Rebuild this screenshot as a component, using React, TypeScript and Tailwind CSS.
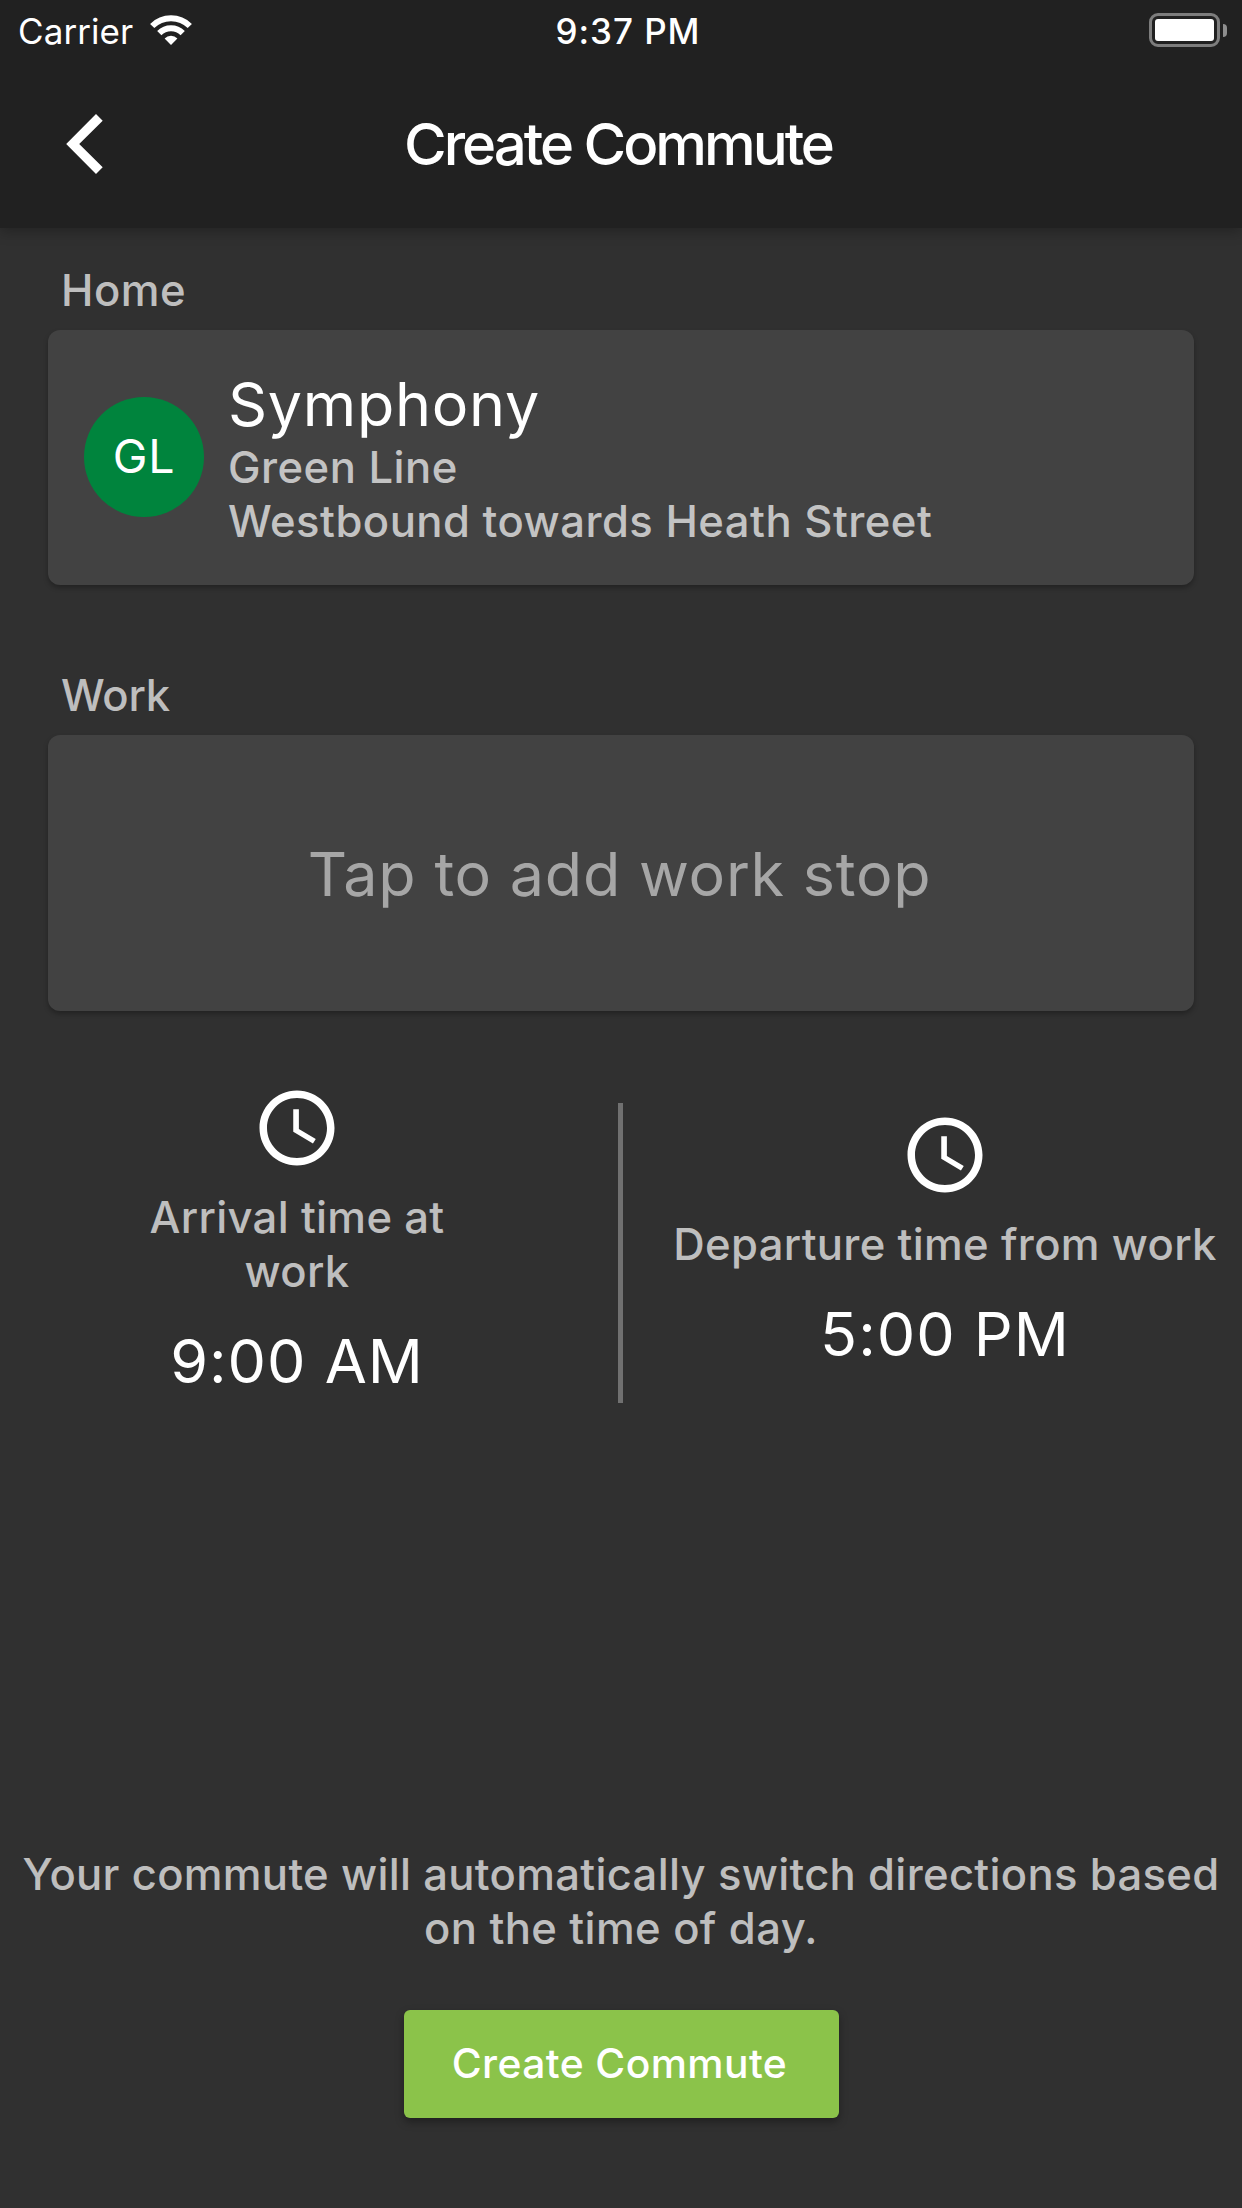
import { MdAccessTime } from "react-icons/md";

function WifiIcon() {
  return (
    <svg className="h-[30px] w-[42px]" viewBox="0 0 42 30" fill="none" stroke="#fff" strokeWidth="6">
      <path d="M2.2 11A26.6 26.6 0 0 1 39.8 11" />
      <path d="M9.3 18.1A16.6 16.6 0 0 1 32.7 18.1" />
      <path d="M14.6 23.4A9 9 0 0 1 27.4 23.4L21 29.9Z" fill="#fff" stroke="none" />
    </svg>
  );
}

function Battery() {
  return (
    <div className="flex items-center gap-[3px]">
      <div className="h-[34px] w-[71px] rounded-[9px] border-3 border-[#7d7d7d] p-[3px]">
        <div className="h-full w-full rounded-[3px] bg-white" />
      </div>
      <div className="h-[13px] w-1 rounded-r-full bg-[#8e8e8e]" />
    </div>
  );
}

function Header() {
  return (
    <header className="z-10 h-[228px] shrink-0 bg-[#212121] shadow-[0_4px_12px_rgba(0,0,0,0.25)]">
      <div className="grid h-[60px] grid-cols-[400px_1fr_400px] items-center pr-[15px] pl-[18px]">
        <div className="flex items-center gap-[17px]">
          <span className="pt-px text-[35px] leading-[42px] tracking-[0.08px]">Carrier</span>
          <WifiIcon />
        </div>
        <span className="pt-px pl-[11px] text-center text-[35px] leading-[42px] font-medium tracking-[0.94px] whitespace-nowrap">
          9:37 PM
        </span>
        <div className="flex justify-end">
          <Battery />
        </div>
      </div>
      <div className="grid h-[168px] grid-cols-[200px_1fr_200px] items-center">
        <button className="ml-[66px] w-[37px]" aria-label="Back">
          <svg className="h-[60px] w-[37px]" viewBox="0 0 37 60" fill="#fff">
            <path d="M0.2 30L30 0L36.7 6.7L13.2 30L36.7 53.3L30 60Z" />
          </svg>
        </button>
        <h1 className="pr-[6px] text-center text-[58.2px] leading-[70px] font-medium tracking-[-3.03px]">
          Create Commute
        </h1>
      </div>
    </header>
  );
}

const card = "mx-[48px] mt-3 flex items-center rounded-xl bg-[#424242] shadow-[0_3px_5px_rgba(0,0,0,0.28)]";
const label = "text-[43.6px] leading-[54px] font-medium text-white/70";

function TimePicker({ title, time, width }: { title: string; time: string; width: string }) {
  return (
    <div className="flex w-[594px] flex-col items-center">
      <MdAccessTime className="size-[90px]" />
      <p className={`mt-[18px] text-center ${label} ${width}`}>{title}</p>
      <p className="mt-[25px] mb-[25px] text-[61px] leading-[74px] tracking-[1px]">{time}</p>
    </div>
  );
}

export default function App() {
  return (
    <div className="flex h-[2208px] w-[1242px] flex-col overflow-hidden bg-[#303030] font-['Inter',sans-serif] text-white">
      <Header />
      <main className="flex flex-1 flex-col">
        <h2 className={`mt-9 ml-[61px] tracking-[0.5px] ${label}`}>Home</h2>
        <section className={`h-[255px] pl-9 ${card}`}>
          <div className="mb-px flex size-[120px] items-center justify-center rounded-full bg-[#00843d] text-[46.5px] tracking-[0.8px]">
            GL
          </div>
          <div className="ml-6">
            <p className="text-[61px] leading-[74px] tracking-[0.7px]">Symphony</p>
            <p className={`tracking-[0.46px] ${label}`}>Green Line</p>
            <p className={`tracking-[0.48px] ${label}`}>Westbound towards Heath Street</p>
          </div>
        </section>

        <h2 className={`mt-[84px] ml-[61px] tracking-[-0.2px] ${label}`}>Work</h2>
        <section className={`h-[276px] justify-center pt-px pr-[3px] ${card}`}>
          <p className="text-[61px] leading-[74px] tracking-[0.77px] text-[#a6a6a6]">Tap to add work stop</p>
        </section>

        <section className="mt-[72px] flex h-[340px] items-center justify-between tracking-[0.32px]">
          <TimePicker title="Arrival time at work" time="9:00 AM" width="w-[340px]" />
          <div className="mr-px h-[300px] w-[5px] shrink-0 bg-[#707070]" />
          <TimePicker title="Departure time from work" time="5:00 PM" width="whitespace-nowrap" />
        </section>

        <footer className="mt-auto flex flex-col items-center pb-[90px]">
          <p className={`text-center tracking-[0.31px] whitespace-nowrap ${label}`}>
            Your commute will automatically switch directions based
            <br />
            <span className="tracking-[0.4px]">on the time of day.</span>
          </p>
          <button className="mt-[54px] h-[108px] w-[435px] rounded-md bg-[#8bc34a] pr-[3px] pb-[2px] text-[40.8px] leading-[50px] font-medium tracking-[0.4px] shadow-[0_4px_8px_rgba(0,0,0,0.35)]">
            Create Commute
          </button>
        </footer>
      </main>
    </div>
  );
}
